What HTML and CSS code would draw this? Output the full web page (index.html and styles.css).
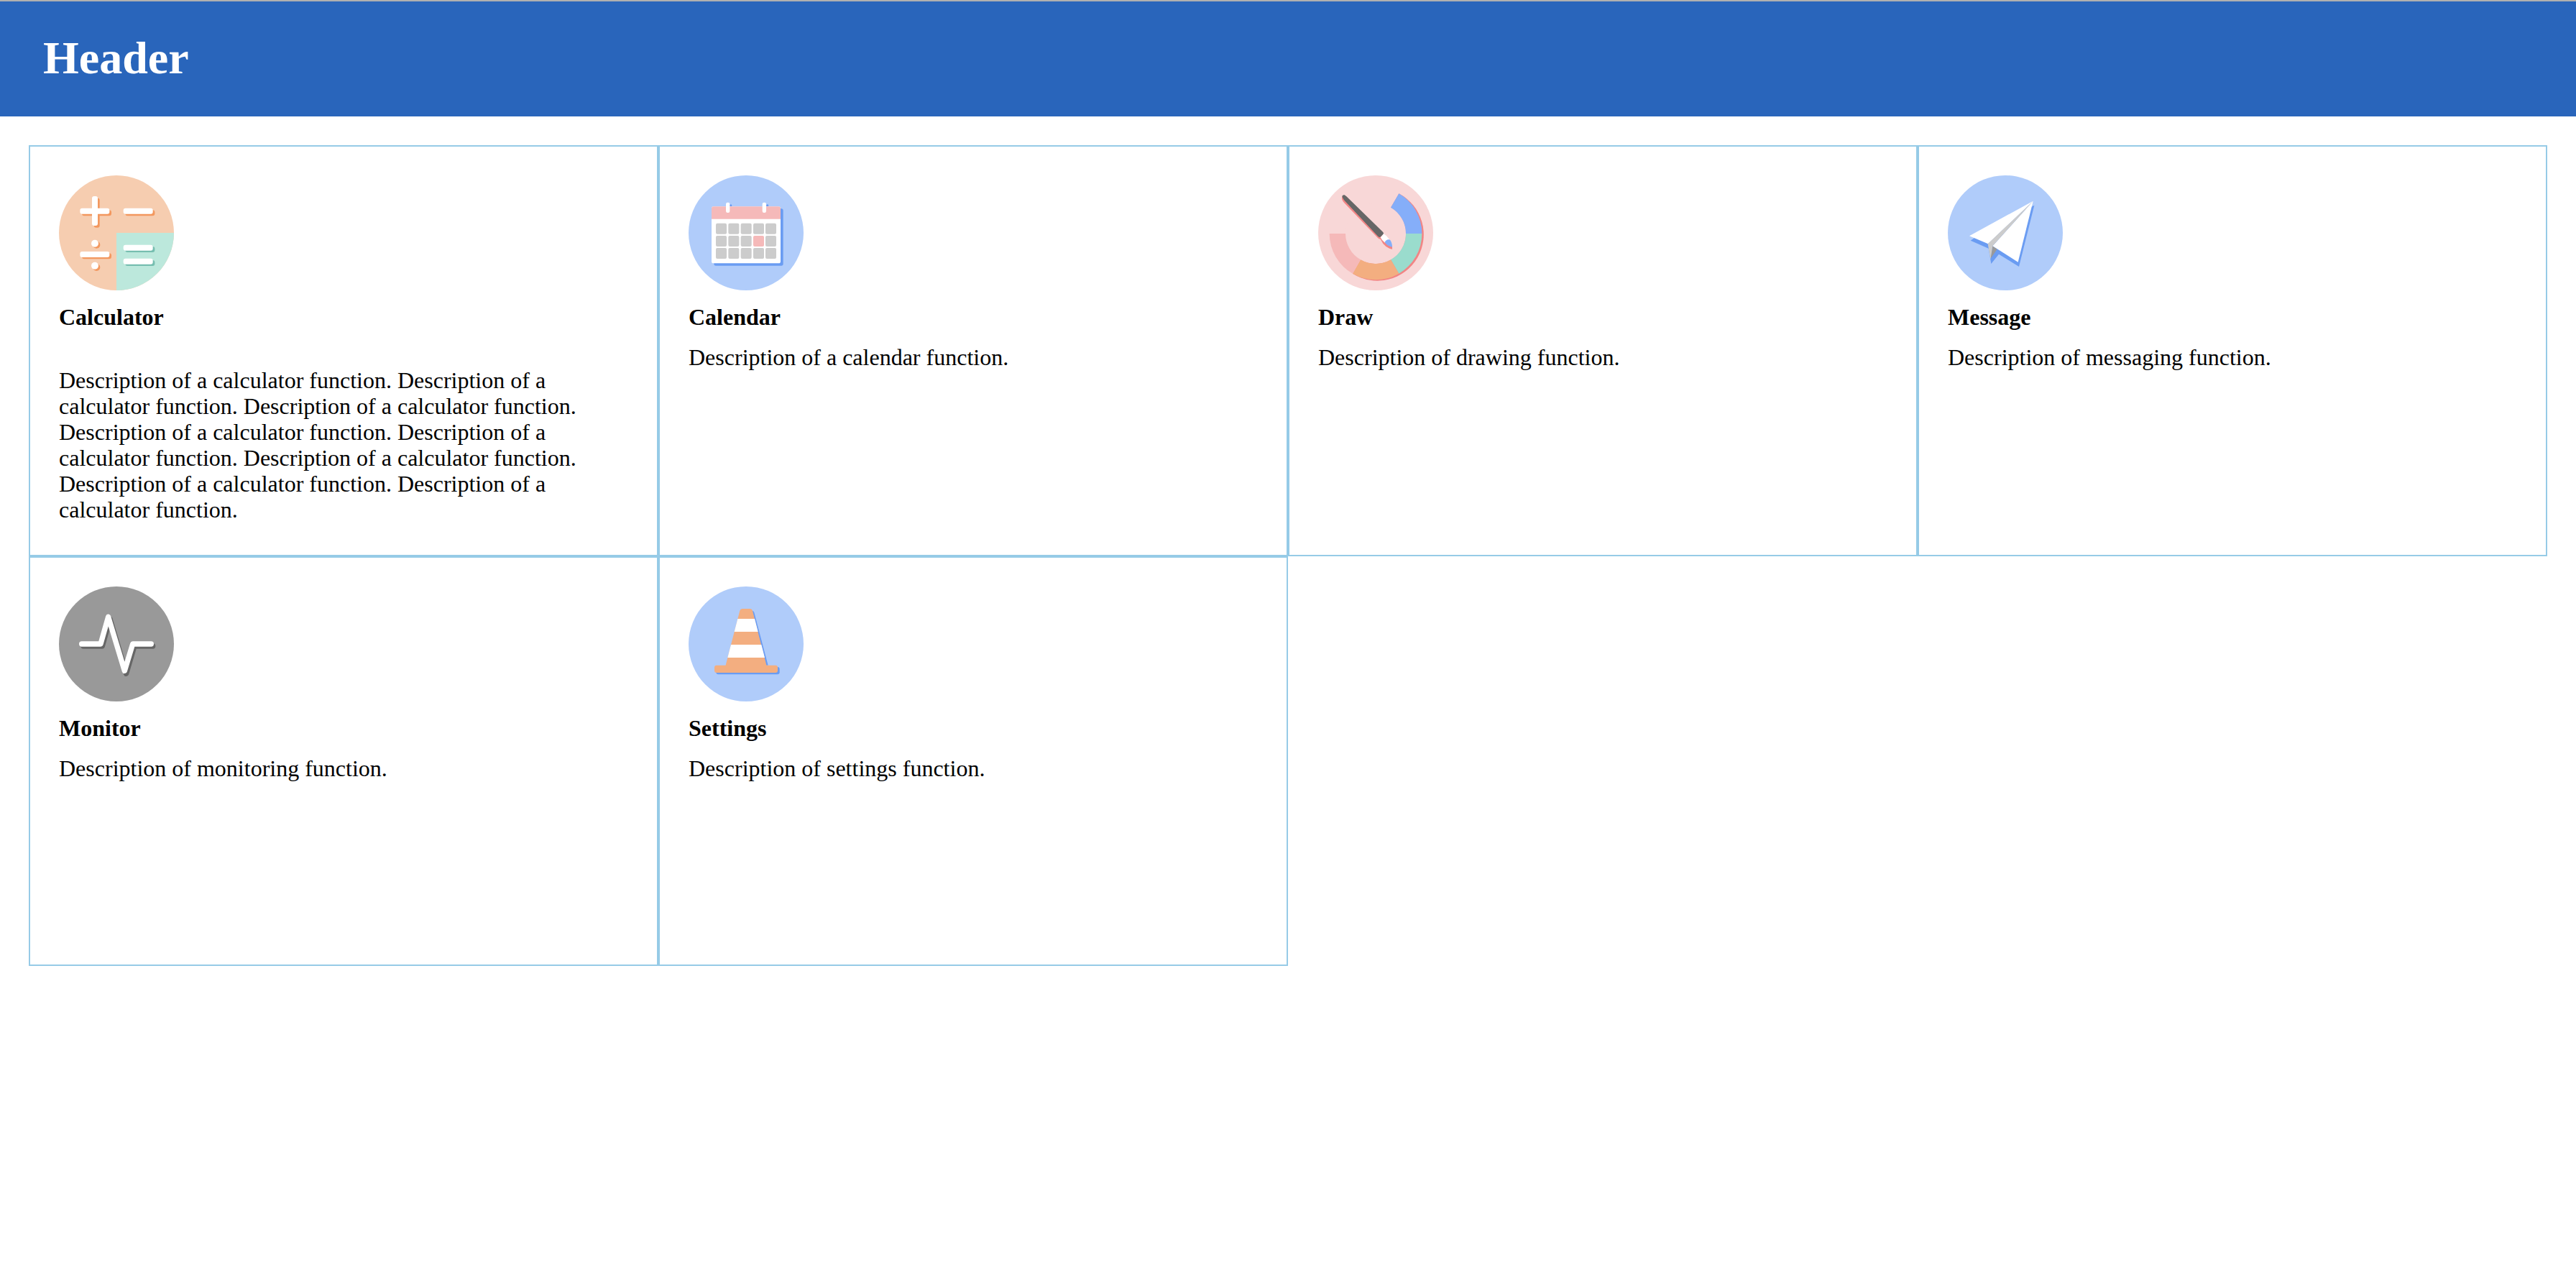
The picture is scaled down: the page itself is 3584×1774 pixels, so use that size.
FILE: index.html
```html
<!DOCTYPE html>
<html lang="en">
<head>
<meta charset="utf-8">
<title>Header</title>
<link rel="stylesheet" href="styles.css">
</head>
<body>
<header class="header"><h1 class="header-title">Header</h1></header>
<main class="grid">
  <section class="card">
    <svg class="icon" viewBox="36 42 480 480" aria-hidden="true">
      <circle cx="276" cy="282" r="240" fill="#f6cdb0"/>
      <path d="M276 282H516A240 240 0 0 1 276 522Z" fill="#bce8dc"/>
      <g fill="#f3985f">
        <rect x="132" y="187" width="123" height="24" rx="9"/><rect x="182" y="137" width="24" height="123" rx="9"/>
        <rect x="313" y="187" width="123" height="24" rx="9"/><rect x="132" y="367" width="123" height="24" rx="9"/>
        <circle cx="193" cy="332" r="15"/><circle cx="193" cy="426" r="15"/>
      </g>
      <g fill="#76beb0"><rect x="313" y="339" width="123" height="24" rx="9"/><rect x="313" y="396" width="123" height="24" rx="9"/></g>
      <g fill="#fff">
        <rect x="124" y="179" width="123" height="24" rx="9"/><rect x="174" y="129" width="24" height="123" rx="9"/>
        <rect x="305" y="179" width="123" height="24" rx="9"/><rect x="124" y="360" width="123" height="24" rx="9"/>
        <circle cx="186" cy="326" r="15"/><circle cx="186" cy="419" r="15"/>
        <rect x="305" y="332" width="123" height="24" rx="9"/><rect x="305" y="389" width="123" height="24" rx="9"/>
      </g>
    </svg>
    <h2 class="card-title">Calculator</h2>
    <div class="card-text"><p>Description of a calculator function. Description of a calculator function. Description of a calculator function. Description of a calculator function. Description of a calculator function. Description of a calculator function. Description of a calculator function. Description of a calculator function.</p></div>
  </section>
  <section class="card">
    <svg class="icon" viewBox="174 162 480 480" aria-hidden="true">
      <circle cx="414" cy="402" r="240" fill="#b0ccfa"/>
      <g fill="#6a9cf2"><rect x="280" y="301" width="289" height="238" rx="8"/><circle cx="350" cy="288" r="5"/><circle cx="503" cy="288" r="5"/></g>
      <rect x="270" y="292" width="288" height="237" rx="8" fill="#fff"/>
      <path d="M270 344V300Q270 292 278 292H550Q558 292 558 300V344Z" fill="#f5b9b9"/>
      <g fill="#fff"><rect x="330" y="275" width="16" height="43" rx="7"/><rect x="482" y="275" width="16" height="43" rx="7"/></g>
      <g fill="#ccc">
        <rect x="288" y="362" width="45" height="45" rx="6"/><rect x="340" y="362" width="45" height="45" rx="6"/><rect x="392" y="362" width="45" height="45" rx="6"/><rect x="444" y="362" width="45" height="45" rx="6"/><rect x="495" y="362" width="45" height="45" rx="6"/>
        <rect x="288" y="414" width="45" height="45" rx="6"/><rect x="340" y="414" width="45" height="45" rx="6"/><rect x="392" y="414" width="45" height="45" rx="6"/><rect x="444" y="414" width="45" height="45" rx="6" fill="#f5b9b9"/><rect x="495" y="414" width="45" height="45" rx="6"/>
        <rect x="288" y="465" width="45" height="45" rx="6"/><rect x="340" y="465" width="45" height="45" rx="6"/><rect x="392" y="465" width="45" height="45" rx="6"/><rect x="444" y="465" width="45" height="45" rx="6"/><rect x="495" y="465" width="45" height="45" rx="6"/>
      </g>
    </svg>
    <h2 class="card-title">Calendar</h2>
    <div class="card-text">Description of a calendar function.</div>
  </section>
  <section class="card">
    <svg class="icon" viewBox="42 42 480 480" aria-hidden="true">
      <circle cx="282" cy="282" r="240" fill="#f8d7d7"/>
      <path d="M379 118A193.04 193.04 0 1 1 186 452Z" fill="#f28585"/>
      <circle cx="282" cy="285" r="127" fill="#f8d7d7"/>
      <path d="M379 118A193 193 0 0 1 475 285H408A126 126 0 0 0 345 176Z" fill="#85aef9"/>
      <path d="M475 285A193 193 0 0 1 379 452L345 394A126 126 0 0 0 408 285Z" fill="#9adccd"/>
      <path d="M379 452A193 193 0 0 1 186 452L219 394A126 126 0 0 0 345 394Z" fill="#f3ae80"/>
      <path d="M186 452A193 193 0 0 1 89 285H156A126 126 0 0 0 219 394Z" fill="#f5b9b9"/>
      <path d="M141 130V142Q144 149 150 156L290 302Q296 309 302 308Q310 327 325 339Q339 349 351 350V338L310 290Z" fill="#f28585"/>
      <path d="M142 128Q145 122 152 124L160 130L312 278Q317 282 314 288L303 298Q298 302 292 297L151 146Q142 134 142 128Z" fill="#666"/>
      <path d="M315 286Q328 293 339 309L321 323Q307 313 302 301Z" fill="#fff"/>
      <path d="M320 321Q328 306 342 311Q351 323 351 341Q331 338 320 321Z" fill="#85aef9"/>
    </svg>
    <h2 class="card-title">Draw</h2>
    <div class="card-text">Description of drawing function.</div>
  </section>
  <section class="card">
    <svg class="icon" viewBox="30 42 480 480" aria-hidden="true">
      <circle cx="270" cy="282" r="240" fill="#b0ccfa"/>
      <path d="M391 167L327 423L243 371L211 411L200 347L125 314L200 260Z" fill="#6a9cf2"/>
      <path d="M217 337L236 350L208 390Z" fill="#999"/>
      <path d="M386 149L120 295L198 328Z" fill="#fff"/>
      <path d="M386 149L217 337L323 404Z" fill="#fff"/>
      <path d="M386 149L197 328L208 392L217 337Z" fill="#ccc"/>
    </svg>
    <h2 class="card-title">Message</h2>
    <div class="card-text">Description of messaging function.</div>
  </section>
  <section class="card">
    <svg class="icon" viewBox="36 48 480 480" aria-hidden="true">
      <circle cx="276" cy="288" r="240" fill="#999"/>
      <g fill="none" stroke-width="22" stroke-linecap="round" stroke-linejoin="round">
        <path d="M138 297H217L249 184L317 412L351 297H428" stroke="#666"/>
        <path d="M131 288H210L242 175L310 400L344 288H421" stroke="#fff"/>
      </g>
    </svg>
    <h2 class="card-title">Monitor</h2>
    <div class="card-text">Description of monitoring function.</div>
  </section>
  <section class="card">
    <svg class="icon" viewBox="54 48 480 480" aria-hidden="true">
      <circle cx="294" cy="288" r="240" fill="#b0ccfa"/>
      <path d="M318 149Q326 148 328 157L386 377H376Z" fill="#6a9cf2"/>
      <rect x="169" y="384" width="265" height="31" rx="9" fill="#6a9cf2"/>
      <path d="M268 149Q270 141 278 141H311Q319 141 321 149L380 380H208Z" fill="#f3ae80"/>
      <path d="M259 183H330L344 237H245ZM231 291H358L372 345H217Z" fill="#fff"/>
      <rect x="162" y="377" width="264" height="31" rx="9" fill="#f3ae80"/>
    </svg>
    <h2 class="card-title">Settings</h2>
    <div class="card-text">Description of settings function.</div>
  </section>
</main>
</body>
</html>
```
FILE: styles.css
```css
* { box-sizing: border-box; }

body {
  margin: 0;
  background: #fff;
  color: #000;
  font-family: "Liberation Serif", "Times New Roman", serif;
  font-size: 32px;
  line-height: 36px;
}

.header {
  border-top: 2px solid #b0b0b0;
  padding: 43px 60px 45px;
  background: #2965bb;
  color: #fff;
}

.header-title {
  margin: 0;
  font-size: 64px;
  line-height: 72px;
}

.grid {
  display: grid;
  grid-template-columns: repeat(4, 1fr);
  grid-auto-rows: minmax(570px, auto);
  padding: 40px;
}

.card {
  display: flex;
  flex-direction: column;
  border: 2px solid #96cbe7;
  padding: 40px 40px 45px;
}

.icon {
  width: 160px;
  height: 160px;
}

.card-title {
  margin: 19px 0 20px;
  font-size: 32px;
  line-height: 36px;
}

.card-text p { margin: 32px 0 0; }
```
